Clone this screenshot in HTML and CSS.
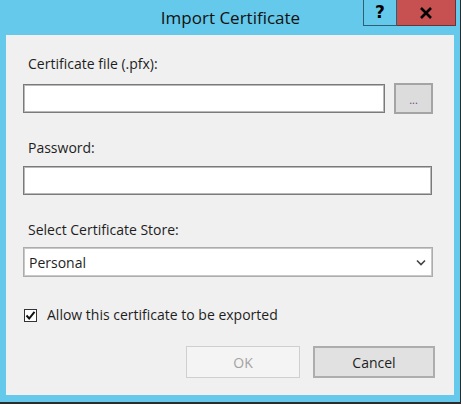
FILE: index.html
```html
<!DOCTYPE html>
<html lang="en">
<head>
    <meta charset="UTF-8">
    <title>Import Certificate</title>
    <link rel="stylesheet" href="styles.css">
</head>
<body>
    <div class="window">
        <div class="titlebar">
            <div class="title">Import Certificate</div>
            <div class="caption-buttons">
                <button class="cap-btn help">?</button>
                <button class="cap-btn close">
                    <svg width="14" height="12" viewBox="0 0 14 12">
                        <path d="M2 1 L12 11 M12 1 L2 11" stroke="#000" stroke-width="2.6" fill="none"/>
                    </svg>
                </button>
            </div>
        </div>

        <div class="client">
            <label class="label file-label">Certificate file (.pfx):</label>
            <div class="file-row">
                <input type="text" class="textbox file-input">
                <button class="btn browse">...</button>
            </div>

            <label class="label pass-label">Password:</label>
            <input type="password" class="textbox password">

            <label class="label store-label">Select Certificate Store:</label>
            <div class="combo">
                <span>Personal</span>
                <svg width="10" height="7" viewBox="0 0 10 7">
                    <path d="M1 1.5 L5 5.5 L9 1.5" stroke="#444" stroke-width="1.6" fill="none"/>
                </svg>
            </div>

            <div class="check-row">
                <span class="checkbox">
                    <svg width="11" height="11" viewBox="0 0 11 11">
                        <path d="M1.5 5.5 L4.2 8.5 L9.5 1.8" stroke="#111" stroke-width="2" fill="none"/>
                    </svg>
                </span>
                <span>Allow this certificate to be exported</span>
            </div>

            <div class="actions">
                <button class="btn ok" disabled>OK</button>
                <button class="btn cancel">Cancel</button>
            </div>
        </div>
    </div>
</body>
</html>
```

FILE: styles.css
```css
body{
    margin : 0;
    background : #fff;
    font-family : "Open Sans", "Noto Sans", sans-serif;
}

.window{
    width : 461px;
    height : 404px;
    box-sizing : border-box;
    background : #65c9eb;
    border-right : 1px solid #2b2b2b;
    border-bottom : 2px solid #2b2b2b;
    padding : 0 6px 7px 6px;
    display : flex;
    flex-direction : column;
}

/* title bar: text centred over the whole width, buttons on the right */
.titlebar{
    height : 35px;
    display : grid;
    grid-template-columns : 1fr auto;
    margin-left : -6px;
    margin-right : -7px;
}

.title{
    grid-area : 1 / 1 / 2 / 3;
    text-align : center;
    font-size : 17px;
    color : #111;
    padding-top : 6px;
}

.caption-buttons{
    grid-area : 1 / 2 / 2 / 3;
    display : flex;
    align-items : flex-start;
    margin-right : 5px;
}

.cap-btn{
    height : 26px;
    border : 1px solid #2f5f73;
    border-top : 0;
    padding : 0;
    display : flex;
    align-items : center;
    justify-content : center;
}

.help{
    width : 34px;
    background : #65c9eb;
    font-family : "DejaVu Sans", sans-serif;
    font-weight : bold;
    font-size : 17px;
    color : #000;
    padding-bottom : 2px;
}

.close{
    width : 59px;
    background : #c75050;
    border-left : 0;
    border-color : #6b3434;
}

.client{
    flex : 1;
    background : #f0f0f0;
    padding : 20px 21px 0 17px;
    display : flex;
    flex-direction : column;
    font-size : 14px;
    color : #1e1e1e;
}

.label{
    display : block;
    line-height : 18px;
    margin-left : 5px;
}

.file-label{
    margin-bottom : 10px;
}

.pass-label{
    margin-top : 25px;
    margin-bottom : 9px;
}

.store-label{
    margin-top : 26px;
    margin-bottom : 8px;
}

.textbox{
    box-sizing : border-box;
    height : 29px;
    border : 1px solid #7a7a7a;
    box-shadow : inset 0 0 0 1px #b9b9b9;
    background : #fff;
    outline : 0;
    margin : 0;
}

.file-row{
    display : flex;
    align-items : center;
    gap : 9px;
}

.file-input{
    flex : 1;
}

.btn{
    box-sizing : border-box;
    font-family : inherit;
    font-size : 14px;
    border : 1px solid #adadad;
    background : #e1e1e1;
    color : #1e1e1e;
    padding : 0;
}

.browse{
    width : 39px;
    height : 31px;
    border-width : 2px;
    border-color : #a4a4a4;
    background : #dcdcdc;
    font-size : 11px;
    color : #6a4a7a;
    padding-top : 2px;
}

.password{
    width : 409px;
}

.combo{
    box-sizing : border-box;
    height : 30px;
    border : 1px solid #acacac;
    box-shadow : inset 0 0 0 1px #c8c8c8;
    background : #fff;
    display : flex;
    align-items : center;
    justify-content : space-between;
    padding : 0 6px 0 5px;
}

.check-row{
    margin-top : 29px;
    display : flex;
    align-items : center;
    gap : 10px;
    line-height : 18px;
    margin-left : 1px;
}

.checkbox{
    width : 13px;
    height : 13px;
    box-sizing : border-box;
    border : 1px solid #333;
    background : #fff;
    display : flex;
    align-items : center;
    justify-content : center;
}

.actions{
    margin-top : 22px;
    display : flex;
    justify-content : flex-end;
    gap : 13px;
    margin-right : -2px;
}

.actions .btn{
    height : 32px;
}

.ok{
    width : 114px;
    background : #f4f4f4;
    border-color : #cfcfcf;
    color : #a3a3a3;
}

.cancel{
    width : 122px;
    border-width : 2px;
    border-color : #adadad;
}
```
